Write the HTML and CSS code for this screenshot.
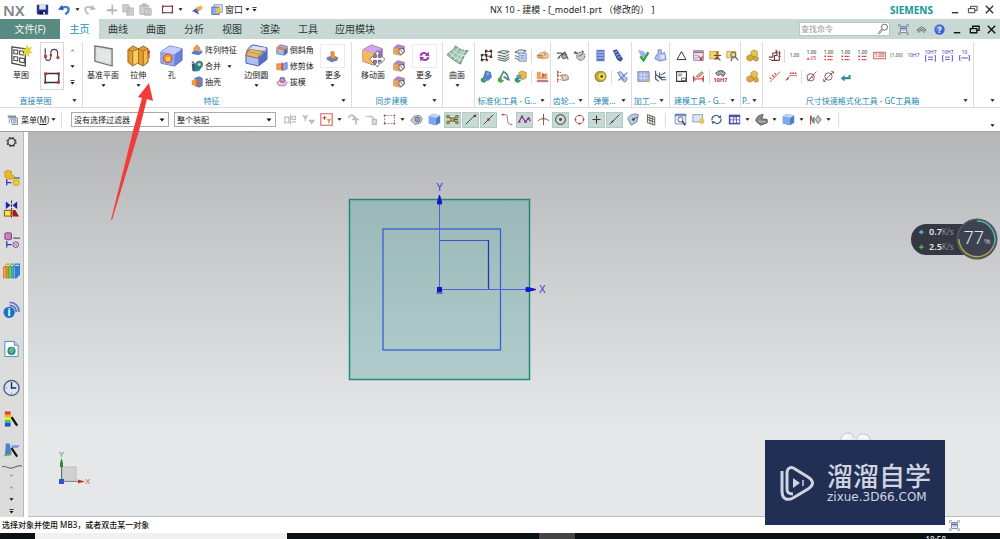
FILE: index.html
```html
<!DOCTYPE html>
<html lang="zh-CN">
<head>
    <meta charset="UTF-8">
    <meta name="viewport" content="width=device-width, initial-scale=1.0">
    <title>NX 10 - 建模</title>
    <link rel="stylesheet" href="styles.css">
</head>

<body>
    <!-- icon set -->
    <svg class="sprite" aria-hidden="true">
        <symbol id="save" viewBox="0 0 16 16"><path d="M1 2h14v12H2l-1-1z" fill="#28368f"/><path d="M4 2h8v6H4z" fill="#dce6f7"/><path d="M4 10h8v4H4z" fill="#111a4c"/><path d="M9 11h2v3H9z" fill="#fff"/></symbol>
        <symbol id="undo" viewBox="0 0 16 16"><path d="M4 7c5-4 10-2 9 2-.5 3-3 4-4 5" fill="none" stroke="#4a7fd0" stroke-width="3"/><path d="M0 8l5-6 2 7z" fill="#2d5db5"/></symbol>
        <symbol id="redo" viewBox="0 0 16 16"><path d="M12 7C7 3 2 5 3 9c.5 3 3 4 4 5" fill="none" stroke="#c4c4c4" stroke-width="2.5"/><path d="M16 8l-5-6-2 7z" fill="#bbb"/></symbol>
        <symbol id="cut" viewBox="0 0 16 16"><path d="M2 9h13M9 2v12M3 9l5-1" stroke="#b5b5b5" stroke-width="2" fill="none"/></symbol>
        <symbol id="copy" viewBox="0 0 16 16"><path d="M1 2h7l1 2v7H1zM6 6h8v9H6z" fill="#cfcfcf" stroke="#b2b2b2"/></symbol>
        <symbol id="paste" viewBox="0 0 16 16"><path d="M1 3h11v11H1zM4 1h5v3H4zM7 7h8v8H7z" fill="#cfcfcf" stroke="#b2b2b2"/></symbol>
        <symbol id="rect" viewBox="0 0 16 16"><path d="M2 4h12v8H2z" fill="none" stroke="#333" stroke-width="1.2"/><path d="M1 3h2.500v2.500H1zM12.500 10.500H15V13h-2.500z" fill="#c33"/><path d="M12.500 3H15v2h-2.500zM1 11h2v2H1z" fill="#933"/></symbol>
        <symbol id="orient" viewBox="0 0 16 16"><path d="M1 10l7-5 5 2-6 5z" fill="#5b75cf"/><path d="M6 6l6-3 3 3-5 4z" fill="#eeb64a"/><path d="M4 9l5 3 1 2-4-2z" fill="#25306e"/></symbol>
        <symbol id="windows" viewBox="0 0 16 16"><path d="M4 1h11v10H4z" fill="#e9f0ff" stroke="#5571b8"/><path d="M1 4h10v10H1z" fill="#8fa9e4" stroke="#42569f"/><path d="M6 6l7-2v7l-6 2z" fill="#eac34e"/></symbol>
        <symbol id="caret" viewBox="0 0 6 6"><path d="M.5 1.500h5L3 4.500z" fill="#111"/></symbol>
        <symbol id="caret-gray" viewBox="0 0 6 6"><path d="M.5 4h5L3 1.500z" fill="#999"/></symbol>
        <symbol id="overflow" viewBox="0 0 6 6"><path d="M.5 0h5v1h-5zM.5 2.500h5L3 5.500z" fill="#111"/></symbol>
        <symbol id="min" viewBox="0 0 12 12"><path d="M2 9.500h7" stroke="currentColor" stroke-width="1.500"/></symbol>
        <symbol id="restore" viewBox="0 0 12 12"><path d="M1.500 5h7v4.500h-7zM4 5V2.500h7V7H8.500" fill="none" stroke="currentColor"/></symbol>
        <symbol id="close" viewBox="0 0 12 12"><path d="M2 2l8 8M10 2l-8 8" stroke="currentColor" stroke-width="1.500"/></symbol>
        <symbol id="search" viewBox="0 0 16 16"><circle cx="10" cy="5.500" r="4" fill="none" stroke="#666" stroke-width="1.300"/><path d="M7 8.500l-5 6" stroke="#777" stroke-width="2.600"/><path d="M7 8.500l-5 6" stroke="#eee"/></symbol>
        <symbol id="fit" viewBox="0 0 16 16"><path d="M1 4V1h3M12 1h3v3M15 12v3h-3M4 15H1v-3" fill="none" stroke="#667"/><path d="M3.500 3.500h9v9h-9z" fill="#fff" stroke="#555"/><path d="M4.500 5h7v3h-7z" fill="#4479bd"/><path d="M5 10h6" stroke="#7a99c4"/></symbol>
        <symbol id="chevrons" viewBox="0 0 16 16"><path d="M2 8l6-4 6 4v2L8 7l-6 3zM3 12.500L8 9l5 3.500" fill="none" stroke="#444"/></symbol>
        <symbol id="help" viewBox="0 0 16 16"><circle cx="8" cy="8" r="7.500" fill="#3b63cf"/><circle cx="7" cy="6" r="5" fill="#6e93ea" opacity=".6"/><text x="8" y="12.500" font-size="12" font-weight="700" fill="#fff" text-anchor="middle">?</text></symbol>

        <symbol id="sketch" viewBox="0 0 24 24"><path d="M2 3l14 2v18L2 20z" fill="#fff" stroke="#444" stroke-width="1.300"/><path d="M4 6l4 .6v4L4 10zM10 7l4 .6v4l-4-.6zM4 13l4 .6v4L4 17zM10 14.500l5 .7v4.500l-5-1z" fill="none" stroke="#555" stroke-width="1.200"/><path d="M18 0l1 4 4-1-2 4 3 2-4 1v4l-3-3-4 1 2-4-3-3 4 0z" fill="#e6d43c"/></symbol>
        <symbol id="spline" viewBox="0 0 16 16"><path d="M2 2v7c0 5 5 5 5 0V6c0-4 6-4 6 0v5" fill="none" stroke="#444" stroke-width="1"/><path d="M1 8h2.500v2.500H1zM6 7h2v2H6zM12 9h2.500v2.500H12z" fill="#c33"/></symbol>
        <symbol id="plane" viewBox="0 0 24 24"><path d="M3 2l18 3v18L3 18z" fill="#d8dddb" stroke="#6c7270" stroke-width="1.300"/><path d="M5 4.500l14 2.500v13L5 16z" fill="#e3e7e5"/></symbol>
        <symbol id="extrude" viewBox="0 0 24 24"><path d="M1 6l5-4 6 3 5-3 5 3v14l-5 4-6-3-5 3-5-4z" fill="#e3a030" stroke="#96662a"/><path d="M6 7l6-2v14l-6 3z" fill="#f7cf68"/><path d="M17 7l4-2v13l-4 4z" fill="#f3bd4c"/><path d="M1 6l5 1.500L12 5l5 2.500L22 5M6 8v14M12 5v15M17 8v14" fill="none" stroke="#9b6a26"/><path d="M23 7v8M21.500 10l1.500-3 1.500 3" stroke="#c22" fill="none"/></symbol>
        <symbol id="hole" viewBox="0 0 24 24"><path d="M1 8l9-6 13 3v12l-8 6-14-3z" fill="#6d80dc" stroke="#5263b5"/><path d="M1 8l14 3v12L1 20z" fill="#93a5ef"/><path d="M1 8l9-6 13 3-8 6z" fill="#c3ccfa"/><circle cx="8" cy="15" r="4.500" fill="#f19a35" stroke="#c84e30"/><circle cx="8.500" cy="15.500" r="2.300" fill="#ffd24f"/></symbol>
        <symbol id="blend" viewBox="0 0 24 24"><path d="M1 12C1 7 5 1 9 1l14 3v12l-9 7-13-3z" fill="#a9c0f3" stroke="#4a5ea8"/><path d="M14 14l9-8v10l-9 7z" fill="#536fc2"/><path d="M1 12c1-4 3-6 5-7l14 3c-3 1-6 3-6 7z" fill="#f3b35c" stroke="#b65b2e"/><path d="M5 5l4-3 13 2-3 3z" fill="#d7e3fc"/><path d="M3 8l13 3" stroke="#7cc080" stroke-width="1.500"/></symbol>
        <symbol id="more-feature" viewBox="0 0 16 16"><path d="M1 9l6-2 8 2-1 4-7 2-6-3z" fill="#5a84cc"/><path d="M6 2h4v5l3 2-3 2-5-1 1-3z" fill="#f0963c" stroke="#a95f2c" stroke-width=".6"/></symbol>
        <symbol id="move-face" viewBox="0 0 24 24"><path d="M1 6l9-5 11 4v12l-9 5-11-4z" fill="#a779c9" stroke="#8a5c9d"/><path d="M1 6l11 4v12L1 18z" fill="#f6b955"/><path d="M1 6l9-5 11 4-9 5z" fill="#d0a6e6"/><path d="M16 7l3 4h-2v3h3v-2l4 4-4 4v-3h-3v3h2l-3 4-3-4h2v-3h-3v3l-4-4 4-4v2h3v-3h-2z" fill="#fff" stroke="#555" stroke-width=".8"/></symbol>
        <symbol id="cycle" viewBox="0 0 16 16"><path d="M2 7c0-5 7-6 9-3l2-2 1 6-6-1 2-1C8 4 5 5 5 7zM14 9c0 5-7 6-9 3l-2 2-1-6 6 1-2 1c2 2 5 1 5-1z" fill="#a23bb0"/></symbol>
        <symbol id="surface" viewBox="0 0 24 24"><path d="M1 11C5 8 8 6 10 2c4 4 8 5 13 5-4 4-5 8-8 14C10 18 5 15 1 11z" fill="#9cc2ab" stroke="#5d8570"/><path d="M4 9c4 5 8 6 13 8M7 6c4 5 8 6 13 6M4 14c4-3 7-6 9-10M8 17c4-3 7-7 9-11M12 19c3-4 5-8 8-13" fill="none" stroke="#dff0e6" stroke-width=".9"/></symbol>
        <symbol id="pattern" viewBox="0 0 16 16"><path d="M1 11l5-3 9 1v3l-5 3-9-2z" fill="#5a7bcb"/><path d="M5 4l3-3 3 3 1 4-4 2-5-2z" fill="#ee9c3f" stroke="#a96c35" stroke-width=".6"/><path d="M9 9l3-3 2 3-2 2z" fill="#8bb1ef"/></symbol>
        <symbol id="unite" viewBox="0 0 16 16"><path d="M1 5l5-1v11H2z" fill="#2c5d7a"/><path d="M5 7h8v5l-3 3H5z" fill="#31867c"/><circle cx="11" cy="6" r="4.500" fill="#3b9a8b" stroke="#1e5f5f"/><circle cx="11" cy="6" r="1.800" fill="#bfe0d8"/><path d="M1 2h3v2H1z" fill="#c44"/></symbol>
        <symbol id="shell" viewBox="0 0 16 16"><path d="M5 3l6-2 4 2v10l-4 2-6-2z" fill="#6286d2" stroke="#394f8d" stroke-width=".7"/><path d="M1 6l6-2v9l-6-1z" fill="#f29a38"/><path d="M7 5l4 1v7l-4-1z" fill="#d9663b"/></symbol>
        <symbol id="chamfer" viewBox="0 0 16 16"><path d="M1 5l4-4 10 2v9l-4 3-10-2z" fill="#a9b8e4" stroke="#46578e" stroke-width=".8"/><path d="M1 6l3-3 9 2-2 4z" fill="#f07a4b"/><path d="M10 9l5-4v7l-4 3z" fill="#5770b5"/></symbol>
        <symbol id="trim" viewBox="0 0 16 16"><path d="M1 5h7v8H1z" fill="#f0a13e" stroke="#a86a38" stroke-width=".7"/><path d="M9 5l6-2v9l-6 2z" fill="#8ea4e4" stroke="#4b5a9c" stroke-width=".7"/><path d="M8 3v11" stroke="#d14" stroke-width="1.200"/></symbol>
        <symbol id="draft" viewBox="0 0 16 16"><path d="M1 9l4-3 1-4h5l1 4 3 3-3 4H4z" fill="#e6cdec" stroke="#8a5f9c"/><path d="M6 3h5l1 4-3 2-4-2z" fill="#c096cf" stroke="#734a86" stroke-width=".8"/><path d="M6 9l2-2 3 3" stroke="#c44" fill="none"/></symbol>
        <symbol id="face-op" viewBox="0 0 16 16"><path d="M1 5l5-4 9 2v8l-5 4-9-2z" fill="#b186ce" stroke="#8c5a4a" stroke-width=".7"/><path d="M1 5l9 2v8l-9-2z" fill="#f1a552"/><path d="M8 7l6-1 1 5-4 3-3-2z" fill="#fff" stroke="#333" stroke-width=".9"/><path d="M10 8l3 4" stroke="#444"/></symbol>

        <symbol id="attr" viewBox="0 0 16 16"><path d="M2 7h6v6H2zM7 3h7v6H7z" fill="none" stroke="#555" stroke-width="1.300"/><path d="M1 6h3v3H1zM6 6h3v3H6zM1 12h3v3H1zM12 1h3v3h-3zM6 1h3v3H6zM12 8h3v3h-3z" fill="#433"/><path d="M7 12h3v3H7z" fill="#a33"/></symbol>
        <symbol id="layers" viewBox="0 0 16 16"><path d="M1 4l6-2 8 1-5 3zM1 7.500l9 2 5-3M1 10.500l9 2 5-3M1 13l9 2 5-3" fill="#e5eee8" stroke="#456155" stroke-width="1.200"/></symbol>
        <symbol id="layers2" viewBox="0 0 16 16"><path d="M1 4l6-3 8 1-5 4zM1 8l5 2M1 11l5 2" fill="#e5eeea" stroke="#5a6a80" stroke-width="1.200"/><path d="M6 5h9v10H6z" fill="#d2dbf6" stroke="#6f7db5"/><path d="M8 8h5M8 10h5M8 12h5" stroke="#8190c6"/></symbol>
        <symbol id="hand" viewBox="0 0 16 16"><path d="M1 8l4-3 6-2 4 3v5l-5 1-8-1z" fill="#edc692" stroke="#b98750" stroke-width=".7"/><path d="M2 8h6M3 10h6M11 5v3" stroke="#9a6c3f"/></symbol>
        <symbol id="part-blue" viewBox="0 0 16 16"><path d="M7 1l6 2 1 6-4 4-6-3z" fill="#4f83cf" stroke="#2d5391" stroke-width=".7"/><path d="M1 10l5-1v3l3 1-4 3-4-2z" fill="#46a069"/><path d="M8 3l4 1-3 3z" fill="#8eb9ee"/></symbol>
        <symbol id="part-green" viewBox="0 0 16 16"><path d="M2 13L8 2l4 3 3 8" fill="none" stroke="#4b8a6a" stroke-width="2"/><path d="M1 10l5-1v3l3 1-4 3-4-2z" fill="#48ab4f"/><path d="M8 8l6 4" stroke="#5b72ba" stroke-width="2"/></symbol>
        <symbol id="part-gold" viewBox="0 0 16 16"><path d="M6 3l4-2 5 2v7l-5 2-4-2z" fill="#e6bb41" stroke="#9b7c34" stroke-width=".7"/><path d="M3 6h6v5H3z" fill="#6a92d5"/><path d="M1 10l5-1v3l3 1-4 3-4-2z" fill="#3f9c57"/></symbol>
        <symbol id="stamp" viewBox="0 0 16 16"><path d="M1 2h5v6h5V4h3v7H1z" fill="#eda35f"/><path d="M1 12h14v3H1z" fill="#b67ba4"/><path d="M7 3l5 3-4 4z" fill="#ca5d52"/></symbol>
        <symbol id="gear-a" viewBox="0 0 16 16"><path d="M1 5h6l7 5M3 10l8-6 4 9M2 12l3-2" fill="none" stroke="#555" stroke-width="1.400"/><circle cx="10" cy="9" r="3" fill="#aaa" stroke="#444"/></symbol>
        <symbol id="gear-b" viewBox="0 0 16 16"><path d="M1 5h5M2 3l5 4M11 2l2 2" stroke="#555" stroke-width="1.500"/><circle cx="9.500" cy="9" r="5" fill="#ccc" stroke="#444" stroke-dasharray="2 1"/><path d="M7 9l5-3" stroke="#444"/></symbol>
        <symbol id="gear-c" viewBox="0 0 16 16"><path d="M2 1v14M2 3h4M2 7h4M2 12h4" stroke="#a55" stroke-width="1.500" stroke-dasharray="2 1"/><path d="M7 6h6l2 2v4l-7 1z" fill="#e3d0bb" stroke="#7a6a60"/></symbol>
        <symbol id="spring-a" viewBox="0 0 16 16"><path d="M3 1h10v14H3z" fill="#5d72c9"/><path d="M4 4h8M4 7.500h8M4 11h8" stroke="#c9d3f9" stroke-width="1.300"/></symbol>
        <symbol id="spring-b" viewBox="0 0 16 16"><path d="M3 2l4-1 7 11-2 3-4-2z" fill="#4458b5" stroke="#2b387f"/><path d="M4 5l5-3M6 8l5-3M8 11l5-3" stroke="#b3c0f3"/></symbol>
        <symbol id="disc" viewBox="0 0 16 16"><path d="M5 2h6c6 3 4 11-1 12H5C0 12 0 4 5 2z" fill="#c5aa2b" stroke="#806f24"/><circle cx="9.500" cy="8" r="4" fill="#efe06b"/><circle cx="9.500" cy="8" r="1.700" fill="#62551f"/></symbol>
        <symbol id="spring-del" viewBox="0 0 16 16"><path d="M2 3l4-1 8 9-3 4-3-2z" fill="#bdcbe8" stroke="#5770ad"/><path d="M3 13L14 3M5 9l5 3" stroke="#718dc6" stroke-width="1.500"/></symbol>
        <symbol id="check" viewBox="0 0 16 16"><path d="M1 1l8 2 2 5-5 3z" fill="#a4b3e0"/><path d="M4 9l4 5 6-10" fill="none" stroke="#35a444" stroke-width="3"/></symbol>
        <symbol id="blocks" viewBox="0 0 16 16"><path d="M5 1h4v5l4-2 2 9-8 2-6-3 2-5h2z" fill="#aebdec" stroke="#6f84c5"/><path d="M8 7h5v5H8z" fill="#dce4f8"/></symbol>
        <symbol id="grid-blue" viewBox="0 0 16 16"><path d="M1 2h14v12H1z" fill="#a6b2df" stroke="#7882b6"/><path d="M2 6h12M2 10h12M5 3v10M9 3v10" stroke="#d9e0f7"/><path d="M12 12l3-1v4h-3z" fill="#e3b650"/></symbol>
        <symbol id="tree" viewBox="0 0 16 16"><path d="M2 1v10l4 3M2 5l8 7M7 3v6h7M9 6l5-3M9 12h6" fill="none" stroke="#456" stroke-width="1.400"/></symbol>
        <symbol id="triangle" viewBox="0 0 16 16"><path d="M8 3l5.500 10h-11z" fill="none" stroke="#333" stroke-width="1.200"/></symbol>
        <symbol id="table-red" viewBox="0 0 16 16"><path d="M2 2h12v12H2z" fill="#e8e3ee" stroke="#887496"/><path d="M2 3h12v2H2z" fill="#a56c86"/><path d="M8 9l5 5M13 9l-3 5" stroke="#c33" stroke-width="1.500"/><path d="M3 8h5M3 11h4" stroke="#a698b4"/></symbol>
        <symbol id="note-a" viewBox="0 0 16 16"><path d="M1 3h11v9H1z" fill="#f0d36d" stroke="#b79b45"/><path d="M10 3v10M6 8h9M7 13l3-3 4 4" stroke="#743" fill="none" stroke-width="1.500"/></symbol>
        <symbol id="note-b" viewBox="0 0 16 16"><path d="M1 3h11v8H1z" fill="#f0d990" stroke="#b79b45"/><circle cx="9" cy="7" r="3" fill="none" stroke="#666" stroke-width="1.300"/><path d="M8 10l-2 5M11 9l4 5" stroke="#666" stroke-width="1.500"/></symbol>
        <symbol id="frame" viewBox="0 0 16 16"><path d="M2 2h12v12H2z" fill="#fff" stroke="#333" stroke-width="1.300"/><path d="M4 5h5M4 7h4M8 10h5v3H8z" stroke="#555" fill="none"/></symbol>
        <symbol id="measure" viewBox="0 0 16 16"><path d="M2 7v8M14 7v8M2 11h12M4 9l-2 2 2 2M12 9l2 2-2 2" stroke="#c33" fill="none" stroke-width="1.200"/><path d="M5 8l7-6 2 2-6 5z" fill="#d6b28e" stroke="#88705f"/></symbol>
        <symbol id="h7" viewBox="0 0 16 16"><path d="M2 4l4-3h5l3 3-3 4-3-3-3 2z" fill="#aaa" stroke="#333"/><text x="8" y="15" font-size="7" font-weight="700" fill="#a33" text-anchor="middle">10H7</text></symbol>
        <symbol id="gold" viewBox="0 0 16 16"><path d="M6 3l4-2 4 2v5l-4 2-4-2z" fill="#e9c34f" stroke="#a98533" stroke-width=".7"/><path d="M1 9l4-2 4 2v4l-4 2-4-2zM9 11l3-2 3 1v4l-4 1z" fill="#d7a936" stroke="#a07a2a" stroke-width=".7"/></symbol>
        <symbol id="dim-steps" viewBox="0 0 16 16"><path d="M1 10h5V5h4V1M4 14h10M14 2v12M8 14V8h3V2" fill="none" stroke="#6a3a3a" stroke-width="1.300"/><path d="M1 13h3M12 5h4M12 9h4" stroke="#c33"/></symbol>
        <symbol id="dim-plain" viewBox="0 0 16 16"><text x="8" y="10" font-size="6" fill="#333" text-anchor="middle">1.00</text></symbol>
        <symbol id="dim-one" viewBox="0 0 16 16"><text x="8" y="6" font-size="6" fill="#222" text-anchor="middle">1.00</text><text x="8" y="14" font-size="6" fill="#c33" text-anchor="middle">±.05</text></symbol>
        <symbol id="dim-two" viewBox="0 0 16 16"><text x="8" y="6" font-size="6" fill="#222" text-anchor="middle">1.00</text><path d="M3 9h2M4 8v2M7 9h6M3 13h2M7 13h6" stroke="#c33" stroke-width="1.500" stroke-dasharray="2 .5"/></symbol>
        <symbol id="dim-box" viewBox="0 0 16 16"><path d="M.5 4h15v8H.5z" fill="#fbeaea" stroke="#b44"/><text x="8" y="10" font-size="6" fill="#a22" text-anchor="middle">1.00</text></symbol>
        <symbol id="dim-ref" viewBox="0 0 16 16"><text x="8" y="10" font-size="6" fill="#444" text-anchor="middle">(1.00)</text></symbol>
        <symbol id="dim-h7" viewBox="0 0 16 16"><text x="8" y="10" font-size="6" fill="#33b" text-anchor="middle">10H7</text></symbol>
        <symbol id="dim-fit" viewBox="0 0 16 16"><text x="8" y="6" font-size="6" fill="#33b" text-anchor="middle">10H7</text><path d="M3 8H2v7h1M13 8h1v7h-1M5 10h6M5 13h6" fill="none" stroke="#55c" stroke-width="1.200"/></symbol>
        <symbol id="dim-tol" viewBox="0 0 16 16"><text x="8" y="6" font-size="6" fill="#33b" text-anchor="middle">10</text><path d="M3 8H2v6h1M13 8h1v6h-1M4 11h8" fill="none" stroke="#55c" stroke-width="1.200"/></symbol>
        <symbol id="slash-red" viewBox="0 0 16 16"><path d="M2 15L15 2" stroke="#c44"/><path d="M2 9l2 2M5 6l3 3M8 4l2 2" stroke="#c44" stroke-width="1.500"/></symbol>
        <symbol id="leader-red" viewBox="0 0 16 16"><path d="M1 13l5-6h9" stroke="#a55" fill="none"/><path d="M6 4h9" stroke="#c33" stroke-width="2" stroke-dasharray="2 1"/><path d="M1 13l4-2-2-2z" fill="#c33"/></symbol>
        <symbol id="dia-a" viewBox="0 0 16 16"><circle cx="7" cy="9" r="4.500" fill="none" stroke="#444"/><path d="M3 14L14 2M7 9h3" stroke="#a33"/></symbol>
        <symbol id="dia-b" viewBox="0 0 16 16"><circle cx="8" cy="8" r="4.500" fill="none" stroke="#555"/><path d="M2 14L14 2M2 11v3h3M11 2h3v3" stroke="#b44" fill="none"/></symbol>
        <symbol id="return" viewBox="0 0 16 16"><path d="M13 6v4H6" fill="none" stroke="#348a99" stroke-width="2.500"/><path d="M2 10l5-4v8z" fill="#348a99"/></symbol>

        <symbol id="menu" viewBox="0 0 16 16"><path d="M1 2h11v3H1z" fill="#7f8fae"/><path d="M5 5h9v9H7zM3 6v6" fill="#dce3ef" stroke="#66758f"/><path d="M7 7h5M8 9h5M8 11h4" stroke="#7a89a7"/></symbol>
        <symbol id="filter-a" viewBox="0 0 16 16"><path d="M1 5h5v7H1zM8 2v12M10 4h4v4h-4zM10 11h5" fill="none" stroke="#bbb" stroke-width="1.500"/></symbol>
        <symbol id="filter-b" viewBox="0 0 16 16"><path d="M1 3l3 4 3-4M4 7v3M9 9l3 4 3-4z" fill="#ccc" stroke="#bbb" stroke-width="1.500"/></symbol>
        <symbol id="priority" viewBox="0 0 16 16"><path d="M1 1h14v14H1z" fill="#fff" stroke="#d45c5c" stroke-width="1.300"/><path d="M3 6h5M5.500 3.500v5" stroke="#b33" stroke-width="1.200"/><path d="M8 7h6l-2 3v3h-2v-3z" fill="#e1aa37"/></symbol>
        <symbol id="ghost-a" viewBox="0 0 16 16"><path d="M2 6c2-5 8-4 7 2M6 8h9M11 5v9" fill="none" stroke="#bbb" stroke-width="2"/></symbol>
        <symbol id="ghost-b" viewBox="0 0 16 16"><path d="M1 4h7l4 4M9 8h5v6H9z" fill="#ddd" stroke="#bbb" stroke-width="1.500"/></symbol>
        <symbol id="marquee" viewBox="0 0 16 16"><path d="M2 3h12v10H2z" fill="none" stroke="#666" stroke-dasharray="2 1.500"/><path d="M1 2h2v2H1zM13 2h2v2h-2zM1 12h2v2H1zM13 12h2v2h-2z" fill="#a44"/></symbol>
        <symbol id="wire" viewBox="0 0 16 16"><path d="M1 9l4-5 7-1 3 4-2 5-7 2z" fill="#cfd3dc" stroke="#666f80"/><circle cx="9" cy="8" r="3" fill="#9aa1b1" stroke="#555f70"/></symbol>
        <symbol id="cube" viewBox="0 0 16 16"><path d="M1 4l5-3 9 2v9l-5 3-9-2z" fill="#4b7cc9"/><path d="M1 4l9 2v9l-9-2z" fill="#7fa8ec"/><path d="M1 4l5-3 9 2-5 3z" fill="#bed6fa"/></symbol>
        <symbol id="snap" viewBox="0 0 16 16"><path d="M2 4l12 8M2 12l12-8M8 8h7" stroke="#333"/><path d="M1 3h3v3H1zM1 10h3v3H1zM6 6h4v4H6zM12 3h3v3h-3zM12 10h3v3h-3z" fill="#c8b52c" stroke="#454015" stroke-width=".7"/></symbol>
        <symbol id="end-point" viewBox="0 0 16 16"><path d="M2 14L13 3" stroke="#444" stroke-width="1.200"/><path d="M12 2h3v3h-3z" fill="#833"/></symbol>
        <symbol id="mid-point" viewBox="0 0 16 16"><path d="M2 14L14 2" stroke="#444" stroke-width="1.200"/><path d="M6.500 6.500h3v3h-3z" fill="#a33"/></symbol>
        <symbol id="curve" viewBox="0 0 16 16"><path d="M2 2c6-1 6 2 6 6s1 6 6 6" fill="none" stroke="#844"/><path d="M1 1h2v2H1z" fill="#a33"/></symbol>
        <symbol id="poles" viewBox="0 0 16 16"><path d="M1 11l4-7 4 7 4-5 2 4" fill="none" stroke="#72318a" stroke-width="1.500"/><path d="M4 3h2v3H4zM8 10h3v2H8zM0 10h3v2H0zM12 5h2v3h-2z" fill="#a3307e"/></symbol>
        <symbol id="intersect" viewBox="0 0 16 16"><path d="M8 1v14M1 10c3-4 11-4 14 0" fill="none" stroke="#544"/><path d="M7 6h2v2H7z" fill="#b33"/></symbol>
        <symbol id="center" viewBox="0 0 16 16"><circle cx="8" cy="8" r="6" fill="none" stroke="#333" stroke-width="1.200"/><circle cx="8" cy="8" r="1.700" fill="#822"/></symbol>
        <symbol id="quadrant" viewBox="0 0 16 16"><circle cx="8" cy="8" r="5" fill="none" stroke="#755"/><path d="M7 2h2v2H7zM7 12h2v2H7zM2 7h2v2H2zM12 7h2v2h-2z" fill="#c33"/></symbol>
        <symbol id="plus" viewBox="0 0 16 16"><path d="M8 3v10M3 8h10" stroke="#333" stroke-width="1.300"/><path d="M7 7h2v2H7z" fill="#a33"/></symbol>
        <symbol id="on-curve" viewBox="0 0 16 16"><path d="M2 14L14 2" stroke="#444" stroke-width="1.200"/><path d="M4.500 9.500h2v2h-2z" fill="#333"/></symbol>
        <symbol id="on-face" viewBox="0 0 16 16"><path d="M1 7c2-5 8-7 13-5l-2 9-7 4z" fill="#bccbe2" stroke="#60738f"/><path d="M6 8l7-3" stroke="#456"/><circle cx="8" cy="8" r="1.500" fill="#345"/></symbol>
        <symbol id="facet" viewBox="0 0 16 16"><path d="M3 2l9 3v10l-9-3zM3 5l9 3M3 8l9 3M6 3v10M9 4v10" fill="none" stroke="#665" stroke-width="1.200"/></symbol>
        <symbol id="zoom-fit" viewBox="0 0 16 16"><path d="M1.500 1.500h13v12h-13z" fill="#edf2fb" stroke="#6a7fb2"/><path d="M1 1h14v3H1z" fill="#7389bf"/><circle cx="8" cy="8" r="3" fill="#fff" stroke="#446"/><path d="M10 10l4 5" stroke="#446" stroke-width="2"/></symbol>
        <symbol id="win-gold" viewBox="0 0 16 16"><path d="M1 2h12v9H1z" fill="#dbe4f3" stroke="#8090ad"/><path d="M9 8l3-2 3 2v4l-3 2-3-2z" fill="#e8c659"/></symbol>
        <symbol id="rotate" viewBox="0 0 16 16"><path d="M2.500 9c-1-5 5-8 9-4M13.500 7c1 5-5 8-9 4" fill="none" stroke="#445f7b" stroke-width="1.500"/><path d="M10 6l4 0-1-4zM6 10l-4 0 1 4z" fill="#445f7b"/></symbol>
        <symbol id="panes" viewBox="0 0 16 16"><path d="M1 2h14v12H1z" fill="#4a50ad"/><path d="M3 5h3v3H3zM7 5h3v3H7zM11 5h3v3h-3zM3 9h3v3H3zM7 9h3v3H7zM11 9h3v3h-3z" fill="#fff"/><path d="M7 5h3v3H7z" fill="#f3a7a0"/></symbol>
        <symbol id="shaded" viewBox="0 0 16 16"><path d="M1 10c0-5 4-8 9-8l-2 5 7 1v4l-8 3z" fill="#888" stroke="#444"/><path d="M4 10l9 1" stroke="#ccc"/></symbol>
        <symbol id="section" viewBox="0 0 16 16"><path d="M2 3v11M2 3l3 8" stroke="#b44" stroke-width="1.500" fill="none"/><path d="M6 5v8" stroke="#3a7" stroke-width="2"/><path d="M11 3l4 5-4 5-3-5z" fill="#d5b9cf" stroke="#667"/></symbol>

        <symbol id="gear" viewBox="0 0 18 18"><circle cx="9" cy="9" r="3.800" fill="none" stroke="#333" stroke-width="1.200"/><circle cx="9" cy="9" r="4.800" fill="none" stroke="#333" stroke-width="1.200" stroke-dasharray="1.900 1.900"/></symbol>
        <symbol id="assembly" viewBox="0 0 18 18"><path d="M2 2l4-1 3 1v4l3 1v3H6l-4-2z" fill="#e9b925" stroke="#b38610" stroke-width=".7"/><path d="M11 12l4-1 2 1v4l-3 1-3-1z" fill="#f5d11f" stroke="#b38610" stroke-width=".7"/><path d="M12 9h6" stroke="#333"/><path d="M4 10v7M4 14h5" stroke="#33a" stroke-width="1.300"/></symbol>
        <symbol id="constraint" viewBox="0 0 18 18"><path d="M3 1l5 4-5 4zM15 1l-5 4 5 4z" fill="#1a22a8"/><path d="M9 0v18" stroke="#333" stroke-dasharray="3 1"/><path d="M1.500 10.500h7v6h-7z" fill="#f7e64a" stroke="#8a4a1c"/><path d="M10 17v-7h3l4 7z" fill="#a51a14"/></symbol>
        <symbol id="part-nav" viewBox="0 0 18 18"><path d="M2 2c2-1 5-1 7 0v6c-2 1-5 1-7 0z" fill="#c184bd" stroke="#7c3f83"/><path d="M11 7h7" stroke="#333"/><path d="M4 10v7M4 14h5" stroke="#33a" stroke-width="1.300"/><circle cx="13.500" cy="14" r="3" fill="#f4e6f4" stroke="#7c3f83"/><path d="M12 12.500l3 3M15 12.500l-3 3" stroke="#7c3f83" stroke-width=".8"/></symbol>
        <symbol id="books" viewBox="0 0 18 18"><path d="M0 5l4-4h3L5 5v12H0z" fill="#ee7a24"/><path d="M5 5l4-4h3l-2 4v12H5z" fill="#4caf3a"/><path d="M10 5l3-4h5v12l-4 4h-4z" fill="#2c7fd3"/><path d="M2 5v12M7.500 5v12M12 5v12" stroke="#fff" opacity=".5"/><path d="M3 3h3M8 3h3M13 3h4" stroke="#fff"/></symbol>
        <symbol id="info" viewBox="0 0 18 18"><path d="M7 1c6 0 10 4 10 10M7 4c4 0 7 3 7 7" fill="none" stroke="#5c75be" stroke-width="1.800"/><circle cx="6.500" cy="11.500" r="6" fill="#1b72c4"/><text x="6.500" y="15.500" font-size="11" font-weight="700" fill="#fff" text-anchor="middle">i</text></symbol>
        <symbol id="web" viewBox="0 0 18 18"><path d="M2 1h10l4 4v12H2z" fill="#fff" stroke="#4a8bb5"/><path d="M12 1v4h4" fill="#cfe3f0" stroke="#4a8bb5"/><circle cx="9" cy="11" r="4.300" fill="#2d7f9c"/><path d="M6 10l3-3 3 2-1 4-3 1z" fill="#5cc07c"/></symbol>
        <symbol id="clock" viewBox="0 0 18 18"><circle cx="9" cy="9" r="8" fill="#d9e4f4" stroke="#53647e" stroke-width="1.500"/><path d="M9 3v6h5" fill="none" stroke="#1c2b49" stroke-width="1.500"/><path d="M3 9h1M9 14v1" stroke="#456"/></symbol>
        <symbol id="palette" viewBox="0 0 18 18"><path d="M2 1h6v4H2z" fill="#e33b25"/><path d="M2 4h6v3H2z" fill="#f3a71d"/><path d="M2 7h6v3H2z" fill="#e9ee28"/><path d="M2 10h6v3H2z" fill="#38cd4b"/><path d="M2 13h6v4H2z" fill="#1d4ed4"/><path d="M9 7l6 9" stroke="#111" stroke-width="2.500"/></symbol>
        <symbol id="stage" viewBox="0 0 18 18"><path d="M3 2h4l2 11-7 3z" fill="#4a80c8"/><path d="M9 4h9l-3 3H9z" fill="#75a2dc"/><path d="M9 7l6 9" stroke="#111" stroke-width="2.300"/><path d="M1 15l8-1" stroke="#8cae5b" stroke-width="1.500"/></symbol>
    </svg>

    <div class="app">
        <header class="titlebar">
            <div class="quick">
                <span class="logo">NX</span>
                <button class="tool first" aria-label="保存"><svg><use href="#save"/></svg></button>
                <button class="tool" aria-label="撤消"><svg><use href="#undo"/></svg></button>
                <button class="drop" aria-label="撤消列表"><svg><use href="#caret"/></svg></button>
                <button class="tool" aria-label="重做"><svg><use href="#redo"/></svg></button>
                <button class="tool apart" aria-label="剪切"><svg><use href="#cut"/></svg></button>
                <button class="tool" aria-label="复制"><svg><use href="#copy"/></svg></button>
                <button class="tool" aria-label="粘贴"><svg><use href="#paste"/></svg></button>
                <button class="tool apart" aria-label="矩形"><svg><use href="#rect"/></svg></button>
                <button class="drop" aria-label="更多曲线"><svg><use href="#caret"/></svg></button>
                <button class="tool apart" aria-label="定向"><svg><use href="#orient"/></svg></button>
                <button class="window-menu"><svg class="icon"><use href="#windows"/></svg>窗口<svg class="arrow"><use href="#caret"/></svg></button>
                <button class="drop" aria-label="自定义"><svg><use href="#overflow"/></svg></button>
            </div>
            <h1 class="title">NX 10 - 建模 - [_model1.prt （修改的） ]</h1>
            <div class="brand">
                <span class="siemens">SIEMENS</span>
                <button class="win" aria-label="最小化"><svg><use href="#min"/></svg></button>
                <button class="win" aria-label="还原"><svg><use href="#restore"/></svg></button>
                <button class="win" aria-label="关闭"><svg><use href="#close"/></svg></button>
            </div>
        </header>

        <nav class="tabs">
            <a class="tab file" href="#file">文件(F)</a>
            <a class="tab active" href="#home">主页</a>
            <a class="tab" href="#curve-tab">曲线</a>
            <a class="tab" href="#surface-tab">曲面</a>
            <a class="tab" href="#analysis">分析</a>
            <a class="tab" href="#view">视图</a>
            <a class="tab" href="#render">渲染</a>
            <a class="tab" href="#tools">工具</a>
            <a class="tab wide" href="#apps">应用模块</a>
            <div class="search">
                <input type="text" placeholder="查找命令" aria-label="查找命令">
                <svg class="icon"><use href="#search"/></svg>
            </div>
            <div class="tab-tools">
                <button class="win" aria-label="全屏"><svg><use href="#fit"/></svg></button>
                <button class="win" aria-label="最小化功能区"><svg><use href="#chevrons"/></svg></button>
                <button class="win" aria-label="帮助"><svg><use href="#help"/></svg></button>
                <button class="win child" aria-label="最小化部件"><svg><use href="#min"/></svg></button>
                <button class="win child" aria-label="还原部件"><svg><use href="#restore"/></svg></button>
                <button class="win child" aria-label="关闭部件"><svg><use href="#close"/></svg></button>
            </div>
        </nav>

        <section class="ribbon">
            <div class="group g-sketch">
                <div class="group-body">
                    <button class="big"><svg class="pic"><use href="#sketch"/></svg>草图</button>
                    <div class="gallery">
                        <button aria-label="轮廓"><svg><use href="#spline"/></svg></button>
                        <button aria-label="矩形"><svg><use href="#rect"/></svg></button>
                    </div>
                    <div class="gallery-nav">
                        <button class="drop" aria-label="上一行"><svg><use href="#caret-gray"/></svg></button>
                        <button class="drop" aria-label="下一行"><svg><use href="#caret"/></svg></button>
                        <button class="drop" aria-label="全部"><svg><use href="#overflow"/></svg></button>
                    </div>
                </div>
                <div class="group-foot"><span>直接草图</span><button class="drop" aria-label="直接草图选项"><svg><use href="#caret"/></svg></button></div>
            </div>

            <div class="group g-feature">
                <div class="group-body">
                    <button class="big plane"><svg class="pic"><use href="#plane"/></svg>基准平面<svg class="arrow"><use href="#caret"/></svg></button>
                    <button class="big"><svg class="pic"><use href="#extrude"/></svg>拉伸<svg class="arrow"><use href="#caret"/></svg></button>
                    <button class="big"><svg class="pic"><use href="#hole"/></svg>孔</button>
                    <div class="list">
                        <button><svg class="icon"><use href="#pattern"/></svg>阵列特征</button>
                        <button><svg class="icon"><use href="#unite"/></svg>合并<svg class="arrow"><use href="#caret"/></svg></button>
                        <button><svg class="icon"><use href="#shell"/></svg>抽壳</button>
                    </div>
                    <button class="big"><svg class="pic"><use href="#blend"/></svg>边倒圆<svg class="arrow"><use href="#caret"/></svg></button>
                    <div class="list">
                        <button><svg class="icon"><use href="#chamfer"/></svg>倒斜角</button>
                        <button><svg class="icon"><use href="#trim"/></svg>修剪体</button>
                        <button><svg class="icon"><use href="#draft"/></svg>拔模</button>
                    </div>
                    <button class="big more"><span class="box"><svg><use href="#more-feature"/></svg></span>更多<svg class="arrow"><use href="#caret"/></svg></button>
                </div>
                <div class="group-foot"><span>特征</span><button class="drop" aria-label="特征选项"><svg><use href="#caret"/></svg></button></div>
            </div>

            <div class="group g-sync">
                <div class="group-body">
                    <button class="big"><svg class="pic"><use href="#move-face"/></svg>移动面</button>
                    <div class="list">
                        <button aria-label="替换面"><svg class="icon"><use href="#face-op"/></svg></button>
                        <button aria-label="偏置区域"><svg class="icon"><use href="#face-op"/></svg></button>
                        <button aria-label="删除面"><svg class="icon"><use href="#face-op"/></svg></button>
                    </div>
                    <button class="big more"><span class="box"><svg><use href="#cycle"/></svg></span>更多<svg class="arrow"><use href="#caret"/></svg></button>
                </div>
                <div class="group-foot"><span>同步建模</span><button class="drop" aria-label="同步建模选项"><svg><use href="#caret"/></svg></button></div>
            </div>

            <div class="group g-surface">
                <div class="group-body">
                    <button class="big"><svg class="pic"><use href="#surface"/></svg>曲面<svg class="arrow"><use href="#caret"/></svg></button>
                </div>
            </div>

            <div class="group g-standard">
                <div class="rows">
                    <div class="row">
                        <button class="tool" aria-label="属性工具"><svg><use href="#attr"/></svg></button>
                        <button class="tool" aria-label="图层"><svg><use href="#layers"/></svg></button>
                        <button class="tool" aria-label="图层类别"><svg><use href="#layers2"/></svg></button>
                        <i class="line"></i>
                        <button class="tool" aria-label="标准"><svg><use href="#hand"/></svg></button>
                    </div>
                    <div class="row">
                        <button class="tool" aria-label="部件"><svg><use href="#part-blue"/></svg></button>
                        <button class="tool" aria-label="检查"><svg><use href="#part-green"/></svg></button>
                        <button class="tool" aria-label="装配"><svg><use href="#part-gold"/></svg></button>
                        <i class="line"></i>
                        <button class="tool" aria-label="图章"><svg><use href="#stamp"/></svg></button>
                    </div>
                </div>
                <div class="group-foot"><span>标准化工具 - G...</span><button class="drop" aria-label="标准化选项"><svg><use href="#caret"/></svg></button></div>
            </div>

            <div class="group g-gear">
                <div class="rows">
                    <div class="row">
                        <button class="tool" aria-label="圆柱齿轮"><svg><use href="#gear-a"/></svg></button>
                        <button class="tool" aria-label="锥齿轮"><svg><use href="#gear-b"/></svg></button>
                    </div>
                    <div class="row">
                        <button class="tool" aria-label="齿轮图样"><svg><use href="#gear-c"/></svg></button>
                    </div>
                </div>
                <div class="group-foot"><span>齿轮...</span><button class="drop" aria-label="齿轮选项"><svg><use href="#caret"/></svg></button></div>
            </div>

            <div class="group g-spring">
                <div class="rows">
                    <div class="row">
                        <button class="tool" aria-label="压缩弹簧"><svg><use href="#spring-a"/></svg></button>
                        <button class="tool" aria-label="拉伸弹簧"><svg><use href="#spring-b"/></svg></button>
                    </div>
                    <div class="row">
                        <button class="tool" aria-label="碟簧"><svg><use href="#disc"/></svg></button>
                        <i class="line"></i>
                        <button class="tool" aria-label="删除弹簧"><svg><use href="#spring-del"/></svg></button>
                    </div>
                </div>
                <div class="group-foot"><span>弹簧...</span><button class="drop" aria-label="弹簧选项"><svg><use href="#caret"/></svg></button></div>
            </div>

            <div class="group g-machine">
                <div class="rows">
                    <div class="row">
                        <button class="tool" aria-label="加工准备"><svg><use href="#check"/></svg></button>
                        <button class="tool" aria-label="毛坯"><svg><use href="#blocks"/></svg></button>
                    </div>
                    <div class="row">
                        <button class="tool" aria-label="工单"><svg><use href="#grid-blue"/></svg></button>
                        <button class="tool" aria-label="结构"><svg><use href="#tree"/></svg></button>
                    </div>
                </div>
                <div class="group-foot"><span>加工...</span><button class="drop" aria-label="加工选项"><svg><use href="#caret"/></svg></button></div>
            </div>

            <div class="group g-model">
                <div class="rows">
                    <div class="row">
                        <button class="tool" aria-label="三角"><svg><use href="#triangle"/></svg></button>
                        <button class="tool" aria-label="表格"><svg><use href="#table-red"/></svg></button>
                        <button class="tool" aria-label="注释"><svg><use href="#note-a"/></svg></button>
                        <button class="tool" aria-label="查找注释"><svg><use href="#note-b"/></svg></button>
                    </div>
                    <div class="row">
                        <button class="tool" aria-label="图框"><svg><use href="#frame"/></svg></button>
                        <button class="tool" aria-label="测量"><svg><use href="#measure"/></svg></button>
                        <i class="line"></i>
                        <button class="tool" aria-label="公差查询"><svg><use href="#h7"/></svg></button>
                    </div>
                </div>
                <div class="group-foot"><span>建模工具 - G...</span><button class="drop" aria-label="建模选项"><svg><use href="#caret"/></svg></button></div>
            </div>

            <div class="group g-part">
                <div class="rows">
                    <div class="row"><button class="tool" aria-label="重用"><svg><use href="#gold"/></svg></button></div>
                    <div class="row"><button class="tool" aria-label="重用库"><svg><use href="#gold"/></svg></button></div>
                </div>
                <div class="group-foot"><span>P..</span><button class="drop" aria-label="部件选项"><svg><use href="#caret"/></svg></button></div>
            </div>

            <div class="group g-dim">
                <div class="rows">
                    <div class="row">
                        <button class="tool" aria-label="坐标尺寸"><svg><use href="#dim-steps"/></svg></button>
                        <i class="line"></i>
                        <button class="tool" aria-label="无公差"><svg><use href="#dim-plain"/></svg></button>
                        <button class="tool" aria-label="等双向公差"><svg><use href="#dim-one"/></svg></button>
                        <button class="tool" aria-label="双向公差"><svg><use href="#dim-two"/></svg></button>
                        <button class="tool" aria-label="单向正公差"><svg><use href="#dim-two"/></svg></button>
                        <button class="tool" aria-label="单向负公差"><svg><use href="#dim-two"/></svg></button>
                        <button class="tool" aria-label="基本尺寸"><svg><use href="#dim-box"/></svg></button>
                        <button class="tool" aria-label="参考尺寸"><svg><use href="#dim-ref"/></svg></button>
                        <button class="tool" aria-label="配合"><svg><use href="#dim-h7"/></svg></button>
                        <button class="tool" aria-label="配合公差"><svg><use href="#dim-fit"/></svg></button>
                        <button class="tool" aria-label="配合极限"><svg><use href="#dim-fit"/></svg></button>
                        <button class="tool" aria-label="极限"><svg><use href="#dim-tol"/></svg></button>
                    </div>
                    <div class="row">
                        <button class="tool" aria-label="倾斜文本"><svg><use href="#slash-red"/></svg></button>
                        <button class="tool" aria-label="引线"><svg><use href="#leader-red"/></svg></button>
                        <i class="line"></i>
                        <button class="tool" aria-label="半径"><svg><use href="#dia-a"/></svg></button>
                        <button class="tool" aria-label="直径"><svg><use href="#dia-b"/></svg></button>
                        <button class="tool" aria-label="恢复"><svg><use href="#return"/></svg></button>
                    </div>
                </div>
                <div class="group-foot"><span>尺寸快速格式化工具 - GC工具箱</span><button class="drop" aria-label="尺寸选项"><svg><use href="#caret"/></svg></button></div>
            </div>

            <div class="group g-rest">
                <div class="rows"></div>
                <div class="group-foot"><span></span><button class="drop" aria-label="功能区选项"><svg><use href="#caret"/></svg></button></div>
            </div>
        </section>

        <section class="toolbar">
            <button class="menu"><svg class="icon"><use href="#menu"/></svg><span>菜单(<u>M</u>)</span><svg class="arrow"><use href="#caret"/></svg></button>
            <i class="line"></i>
            <div class="pick filter"><select aria-label="类型过滤器"><option>没有选择过滤器</option></select><svg class="arrow"><use href="#caret"/></svg></div>
            <div class="pick scope"><select aria-label="选择范围"><option>整个装配</option></select><svg class="arrow"><use href="#caret"/></svg></div>
            <button class="tool" aria-label="颜色过滤器"><svg><use href="#filter-a"/></svg></button>
            <button class="tool" aria-label="重置过滤器"><svg><use href="#filter-b"/></svg></button>
            <button class="tool" aria-label="选择优先级"><svg><use href="#priority"/></svg></button>
            <button class="drop" aria-label="优先级列表"><svg><use href="#caret"/></svg></button>
            <button class="tool" aria-label="恢复选择"><svg><use href="#ghost-a"/></svg></button>
            <button class="tool" aria-label="全选"><svg><use href="#ghost-b"/></svg></button>
            <button class="tool" aria-label="框选"><svg><use href="#marquee"/></svg></button>
            <button class="drop" aria-label="框选列表"><svg><use href="#caret"/></svg></button>
            <button class="tool" aria-label="隐藏边"><svg><use href="#wire"/></svg></button>
            <button class="tool" aria-label="着色"><svg><use href="#cube"/></svg></button>
            <div class="snaps">
                <button class="tool on" aria-label="启用捕捉点"><svg><use href="#snap"/></svg></button>
                <button class="tool on" aria-label="端点"><svg><use href="#end-point"/></svg></button>
                <button class="tool on" aria-label="中点"><svg><use href="#mid-point"/></svg></button>
                <button class="tool" aria-label="控制点"><svg><use href="#curve"/></svg></button>
                <button class="tool on" aria-label="极点"><svg><use href="#poles"/></svg></button>
                <button class="tool" aria-label="交点"><svg><use href="#intersect"/></svg></button>
                <button class="tool on" aria-label="圆弧中心"><svg><use href="#center"/></svg></button>
                <button class="tool" aria-label="象限点"><svg><use href="#quadrant"/></svg></button>
                <button class="tool on" aria-label="现有点"><svg><use href="#plus"/></svg></button>
                <button class="tool on" aria-label="曲线上的点"><svg><use href="#on-curve"/></svg></button>
                <button class="tool" aria-label="面上的点"><svg><use href="#on-face"/></svg></button>
                <button class="tool" aria-label="小平面顶点"><svg><use href="#facet"/></svg></button>
            </div>
            <i class="line"></i>
            <button class="tool" aria-label="适合窗口"><svg><use href="#zoom-fit"/></svg></button>
            <button class="tool" aria-label="缩放"><svg><use href="#win-gold"/></svg></button>
            <button class="tool" aria-label="旋转"><svg><use href="#rotate"/></svg></button>
            <button class="tool" aria-label="布局"><svg><use href="#panes"/></svg></button>
            <button class="drop" aria-label="布局列表"><svg><use href="#caret"/></svg></button>
            <button class="tool" aria-label="渲染样式"><svg><use href="#shaded"/></svg></button>
            <button class="drop" aria-label="渲染样式列表"><svg><use href="#caret"/></svg></button>
            <button class="tool" aria-label="视图方向"><svg><use href="#cube"/></svg></button>
            <button class="drop" aria-label="视图方向列表"><svg><use href="#caret"/></svg></button>
            <button class="tool" aria-label="显示和隐藏"><svg><use href="#section"/></svg></button>
            <button class="drop" aria-label="显示列表"><svg><use href="#caret"/></svg></button>
            <i class="line"></i>
            <button class="drop last" aria-label="工具条选项"><svg><use href="#caret"/></svg></button>
        </section>

        <main class="work">
            <aside class="rail">
                <button class="gear" aria-label="设置"><svg><use href="#gear"/></svg></button>
                <button aria-label="装配导航器"><svg><use href="#assembly"/></svg></button>
                <button aria-label="约束导航器"><svg><use href="#constraint"/></svg></button>
                <button aria-label="部件导航器"><svg><use href="#part-nav"/></svg></button>
                <button aria-label="重用库"><svg><use href="#books"/></svg></button>
                <button class="spaced" aria-label="HD3D 工具"><svg><use href="#info"/></svg></button>
                <button class="spaced" aria-label="Web 浏览器"><svg><use href="#web"/></svg></button>
                <button class="spaced" aria-label="历史记录"><svg><use href="#clock"/></svg></button>
                <button aria-label="系统材料"><svg><use href="#palette"/></svg></button>
                <button aria-label="系统可视化场景"><svg><use href="#stage"/></svg></button>
                <div class="rail-nav">
                    <svg class="wave" viewBox="0 0 20 4"><path d="M0 2c3-2 6 2 10 1s6-3 10-2" fill="none" stroke="#555"/></svg>
                    <button class="drop" aria-label="顶部"><svg><use href="#caret-gray"/></svg></button>
                    <button class="drop" aria-label="向上"><svg><use href="#caret-gray"/></svg></button>
                    <button class="drop" aria-label="向下"><svg><use href="#caret"/></svg></button>
                    <button class="drop" aria-label="底部"><svg><use href="#overflow"/></svg></button>
                </div>
            </aside>

            <div class="canvas">
                <svg class="model" viewBox="0 0 972 385" preserveAspectRatio="xMinYMin meet">
                    <rect x="321.500" y="67.500" width="180" height="180" fill="#4da6a3" fill-opacity=".32" stroke="#1c8a7d" stroke-width="1.500"/>
                    <rect x="355" y="97" width="117.500" height="121" fill="none" stroke="#3a5fd9" stroke-width="1.300"/>
                    <path d="M411.500 108.500h49" stroke="#3b52c9"/>
                    <path d="M460.500 108v49" stroke="#2137bd" stroke-width="1.300"/>
                    <path d="M411.500 157.500V70M411.500 157.500h92" stroke="#4a63e0"/>
                    <path d="M411.500 63l-2 7v2h4v-2zM508 157.500l-8-2h-2v4h2z" fill="#1414d2" stroke="#1414d2"/>
                    <path d="M409 155h5v5h-5z" fill="#1414b4"/>
                    <path d="M408.500 161h6" stroke="#1414b4"/>
                    <text x="411.500" y="59" class="axis" text-anchor="middle">Y</text>
                    <text x="511" y="161" class="axis">X</text>

                    <rect x="34" y="335" width="14" height="14" fill="#d0d1d1" stroke="#bbb"/>
                    <path d="M33.500 348v-18" stroke="#567a56"/>
                    <path d="M33.500 326l-1.500 5v4h3v-4z" fill="#2b8a36"/>
                    <path d="M36 349.500h14" stroke="#888"/>
                    <path d="M57 349.500l-7-2v4z" fill="#c8322e"/>
                    <path d="M31 347h5v5h-5z" fill="#2f50d0"/>
                    <text x="33.500" y="325" class="triad y" text-anchor="middle">Y</text>
                    <text x="57" y="352" class="triad x">X</text>
                </svg>
            </div>
        </main>

        <footer class="status">
            <span>选择对象并使用 MB3，或者双击某一对象</span>
            <button class="win" aria-label="全屏显示"><svg><use href="#fit"/></svg></button>
        </footer>
        <div class="taskbar"><i class="start"></i><i class="field"></i><i class="running"></i><time>18:58</time></div>
    </div>

    <!-- red pointer arrow over the ribbon -->
    <svg class="pointer" viewBox="0 0 44 138"><path d="M38 0l4 18-6-2-8 32L1 137 0 137 22 48 31 15l-4-1z" fill="#f23c3c"/></svg>

    <div class="speed">
        <div class="rates">
            <p><b class="up">✦</b>0.7<small>K/s</small></p>
            <p><b class="down">✦</b>2.5<small>K/s</small></p>
        </div>
        <div class="dial">
            <svg viewBox="0 0 42 42"><circle cx="21" cy="21" r="20.500" fill="#54585f"/><circle cx="21" cy="21" r="19" fill="#3d4250"/><path d="M21 3a18 18 0 0 1 16 26" fill="none" stroke="#52b5b5" stroke-width="1.500"/><path d="M37 29A18 18 0 0 1 3 21" fill="none" stroke="#b5a14d" stroke-width="1.500"/></svg>
            <span>77<small>%</small></span>
        </div>
    </div>

    <div class="ad">
        <svg class="clouds" viewBox="0 0 32 8"><path d="M1 8c0-9 12-9 13-2M17 7c1-7 12-7 13 1" fill="#f6f6f6" stroke="#cfd0d2" stroke-width="1.500"/></svg>
        <svg class="play" viewBox="0 0 34 36"><path d="M2 6v20c0 8 5 10 11 7l15-9c6-4 6-8 0-12L15 4C11 1 7 3 7 8v16c0 4 2 5 6 5" fill="none" stroke="#d0d4e0" stroke-width="3"/><path d="M13 13l7 5-7 5z" fill="#d0d4e0"/><path d="M23 15v6" stroke="#d0d4e0" stroke-width="1.500"/></svg>
        <div>
            <strong>溜溜自学</strong>
            <em>zixue.3D66.COM</em>
        </div>
    </div>
</body>
</html>
```
FILE: styles.css
```css
* {
    box-sizing: border-box;
}

body {
    margin: 0;
    font-family: "Noto Sans", "Noto Sans CJK SC", sans-serif;
    font-size: 8px;
    line-height: 12px;
    color: #222;
    background: #fff;
}

button {
    font: inherit;
    color: inherit;
    background: none;
    border: none;
    padding: 0;
    margin: 0;
    cursor: pointer;
    white-space: nowrap;
}

svg {
    display: block;
    flex: none;
}

.sprite {
    display: none;
}

.app {
    display: flex;
    flex-direction: column;
    height: 100vh;
}

/* shared pieces */
.tool {
    flex: none;
    width: 17px;
    height: 16px;
    display: flex;
    align-items: center;
    justify-content: center;
}

.tool svg {
    width: 13px;
    height: 13px;
}

.drop {
    flex: none;
    width: 8px;
    height: 12px;
    display: flex;
    align-items: center;
    justify-content: center;
}

.drop svg,
.arrow {
    width: 5px;
    height: 5px;
}

.icon {
    width: 12px;
    height: 12px;
}

.line {
    flex: none;
    width: 1px;
    height: 14px;
    background: #dcdcdc;
    margin: 0 2px;
}

.win {
    width: 17px;
    height: 16px;
    display: flex;
    align-items: center;
    justify-content: center;
    color: #333;
}

.win svg {
    width: 11px;
    height: 11px;
}

/* title bar */
.titlebar {
    flex: none;
    height: 19px;
    display: grid;
    grid-template-columns: 49% auto 1fr;
    align-items: center;
}

.quick {
    display: flex;
    align-items: center;
    padding-left: 3px;
}

.quick .first {
    margin-left: 8px;
    margin-right: 5px;
}

.quick .apart {
    margin-left: 5px;
}

.logo {
    font-size: 15px;
    font-weight: 600;
    color: #7d8589;
    width: 23px;
}

.window-menu {
    display: flex;
    align-items: center;
    gap: 2px;
    margin-left: 5px;
    font-size: 9px;
}

.title {
    margin: 0;
    font-size: 9px;
    font-weight: 400;
    color: #222;
    white-space: pre;
}

.brand {
    display: flex;
    align-items: center;
    justify-content: flex-end;
    padding-right: 2px;
}

.siemens {
    font-family: "Open Sans", sans-serif;
    font-size: 10px;
    font-weight: 700;
    color: #15959a;
    margin-right: 14px;
}

/* tabs */
.tabs {
    flex: none;
    height: 20px;
    display: flex;
    align-items: stretch;
    background: #c8d9d5;
    font-size: 10px;
}

.tab {
    width: 38px;
    display: flex;
    align-items: center;
    justify-content: center;
    color: #2d3836;
    text-decoration: none;
}

.tab.file {
    width: 60px;
    background: #5a8b83;
    color: #eef6f4;
}

.tab.active {
    width: 39px;
    background: #fff;
    color: #1c90b8;
}

.tab.wide {
    width: 56px;
}

.search {
    margin-left: auto;
    align-self: center;
    width: 91px;
    height: 14px;
    display: flex;
    align-items: center;
    background: #fff;
    border: 1px solid #b9c8c5;
}

.search input {
    flex: 1;
    min-width: 0;
    border: none;
    padding: 0 1px;
    font: inherit;
    font-size: 8px;
    line-height: 12px;
    outline: none;
}

.search input::placeholder {
    color: #999;
}

.tab-tools {
    display: flex;
    align-items: center;
    gap: 1px;
    padding-left: 5px;
    padding-right: 1px;
}

.child {
    color: #111;
    width: 16px;
}

.child svg {
    stroke-width: 1.5;
}

/* ribbon */
.ribbon {
    flex: none;
    height: 69px;
    display: flex;
    border-bottom: 1px solid #dcdcdc;
}

.group {
    flex: none;
    display: flex;
    flex-direction: column;
    border-right: 1px solid #dedede;
    margin-top: 3px;
}

.g-sketch { width: 83px; }
.g-feature { width: 269px; }
.g-sync { width: 91px; }
.g-surface { width: 32px; }
.g-standard { width: 76px; }
.g-gear { width: 38px; }
.g-spring { width: 43px; }
.g-machine { width: 38px; }
.g-model { width: 71px; }
.g-part { width: 22px; }
.g-dim { width: 211px; }

.g-rest {
    flex: 1;
    border-right: none;
}

.group-body {
    flex: 1;
    display: flex;
    align-items: flex-start;
    justify-content: space-between;
    padding: 0 4px;
}

.group-foot {
    height: 13px;
    display: flex;
    align-items: center;
    color: #2688b5;
    padding: 0 4px 0 1px;
    white-space: nowrap;
}

.group-foot span {
    flex: 1;
    min-width: 0;
    text-align: center;
}

.g-sketch .group-body {
    padding-left: 7px;
    padding-right: 6px;
}

.g-sync .group-body {
    padding-left: 7px;
}

.g-surface .group-body {
    padding: 0;
}

.big {
    min-width: 28px;
    display: flex;
    flex-direction: column;
    align-items: center;
    padding-top: 2px;
}

.pic {
    width: 23px;
    height: 23px;
    margin-bottom: 2px;
}

.big .arrow {
    margin-top: 2px;
}

.box {
    width: 25px;
    height: 24px;
    margin-bottom: 1px;
    display: flex;
    align-items: center;
    justify-content: center;
    border: 1px solid #ececec;
}

.box svg {
    width: 13px;
    height: 13px;
}

.gallery {
    width: 24px;
    height: 48px;
    border: 1px solid #d6d6d6;
    display: flex;
    flex-direction: column;
    align-items: center;
    justify-content: space-around;
}

.gallery svg {
    width: 18px;
    height: 18px;
}

.gallery-nav {
    height: 48px;
    display: flex;
    flex-direction: column;
    justify-content: space-around;
}

.list {
    display: flex;
    flex-direction: column;
}

.list button {
    height: 16px;
    display: flex;
    align-items: center;
    gap: 2px;
}

.list .arrow {
    margin-left: 4px;
}

.rows {
    flex: 1;
    padding: 3px 0 0 3px;
}

.row {
    height: 21px;
    display: flex;
    align-items: center;
}

.g-dim .line {
    margin: 0 1px;
}

/* selection toolbar */
.toolbar {
    flex: none;
    height: 24px;
    display: flex;
    align-items: center;
    border-bottom: 1px solid #9fa3a6;
    padding-left: 7px;
}

.toolbar .tool {
    width: 18px;
}

.toolbar .drop {
    width: 9px;
}

.toolbar .on {
    background: #c8dad6;
    border: 1px solid #b3c9c4;
    width: 17px;
    margin-right: 1px;
}

.toolbar .line {
    margin: 0 5px;
}

.snaps {
    display: flex;
    margin-left: 1px;
}

.menu {
    display: flex;
    align-items: center;
    gap: 2px;
}

.pick {
    display: grid;
    align-items: center;
    height: 15px;
    margin-right: 5px;
}

.pick select,
.pick .arrow {
    grid-area: 1 / 1;
}

.pick select {
    appearance: none;
    width: 100%;
    height: 15px;
    font: inherit;
    color: #222;
    background: #fff;
    border: 1px solid #aaa;
    border-radius: 0;
    padding: 0 2px;
}

.pick .arrow {
    justify-self: end;
    margin-right: 4px;
    width: 6px;
    height: 6px;
    pointer-events: none;
}

.filter {
    width: 98px;
    margin-left: 4px;
}

.scope {
    width: 102px;
}

.last {
    margin-left: auto;
    margin-right: 3px;
    align-self: flex-end;
}

/* work area */
.work {
    flex: 1;
    min-height: 0;
    display: flex;
}

.rail {
    flex: none;
    width: 24px;
    display: flex;
    flex-direction: column;
    align-items: center;
    background: #dcdcdc;
    border-right: 1px solid #b9b9b9;
    overflow: hidden;
}

.rail > button {
    flex: none;
    height: 31px;
    display: flex;
    align-items: center;
}

.rail > button svg {
    width: 17px;
    height: 18px;
}

.rail > .gear {
    height: 19px;
    margin-bottom: 11px;
}

.rail > .spaced {
    margin-top: 8px;
}

.rail-nav {
    display: flex;
    flex-direction: column;
    align-items: center;
}

.wave {
    width: 20px;
    height: 4px;
}

.canvas {
    flex: 1;
    min-width: 0;
    margin-left: 4px;
    background: linear-gradient(#b4b6b7, #d4d5d6 48%, #e5e7e8 78%, #e6e7e8);
    border-bottom: 1px solid #bcbcbc;
}

.model {
    width: 100%;
}

.axis {
    font-family: "Liberation Sans", sans-serif;
    font-size: 10px;
    fill: #3a3ae0;
}

.triad {
    font-family: "Liberation Sans", sans-serif;
    font-size: 8px;
}

.triad.x {
    fill: #cf5450;
}

.triad.y {
    fill: #4f8f55;
}

/* bottom bars */
.status {
    flex: none;
    height: 16px;
    display: flex;
    align-items: center;
    justify-content: space-between;
    padding: 0 37px 0 2px;
    font-weight: 500;
    color: #111;
}

.taskbar {
    flex: none;
    height: 6px;
    display: flex;
    background: #0a1216;
    color: #fff;
    overflow: hidden;
}

.start {
    width: 35px;
}

.field {
    width: 252px;
    background: #f0f0f0;
}

.running {
    width: 36px;
    margin-left: 252px;
    background: #444;
}

.taskbar time {
    margin-left: auto;
    margin-right: 54px;
    line-height: 14px;
}

/* overlays */
.pointer {
    position: absolute;
    left: 111px;
    top: 83px;
    width: 44px;
    height: 138px;
    pointer-events: none;
}

.speed {
    position: absolute;
    right: 2px;
    top: 218px;
    display: flex;
    align-items: center;
}

.rates {
    width: 60px;
    height: 31px;
    margin-right: -15px;
    padding: 0 0 0 7px;
    background: #343842;
    border-radius: 16px 0 0 16px;
    color: #e6e6e6;
}

.rates p {
    margin: 0;
    font-size: 9px;
    line-height: 15px;
    font-weight: 600;
}

.rates b {
    display: inline-block;
    width: 11px;
    font-size: 8px;
}

.rates small {
    font-size: 8px;
    font-weight: 400;
    color: #8d919a;
}

.up {
    color: #4fb3d9;
}

.down {
    color: #4caf50;
}

.dial {
    display: grid;
    place-items: center;
}

.dial svg,
.dial span {
    grid-area: 1 / 1;
}

.dial svg {
    width: 42px;
    height: 42px;
}

.dial span {
    color: #e4e6ea;
    font-size: 18px;
    font-weight: 300;
}

.dial small {
    font-size: 8px;
}

.ad {
    position: absolute;
    right: 55px;
    bottom: 14px;
    width: 180px;
    height: 85px;
    display: flex;
    align-items: center;
    gap: 13px;
    padding-left: 15px;
    background: #222f55;
    color: #d0d4e0;
}

.clouds {
    position: absolute;
    left: 75px;
    top: -8px;
    width: 32px;
    height: 8px;
}

.play {
    width: 34px;
    height: 36px;
}

.ad strong {
    display: block;
    font-size: 26px;
    line-height: 28px;
    font-weight: 500;
}

.ad em {
    display: block;
    font-family: "DejaVu Sans", sans-serif;
    font-size: 12px;
    line-height: 14px;
    font-style: normal;
}
```
